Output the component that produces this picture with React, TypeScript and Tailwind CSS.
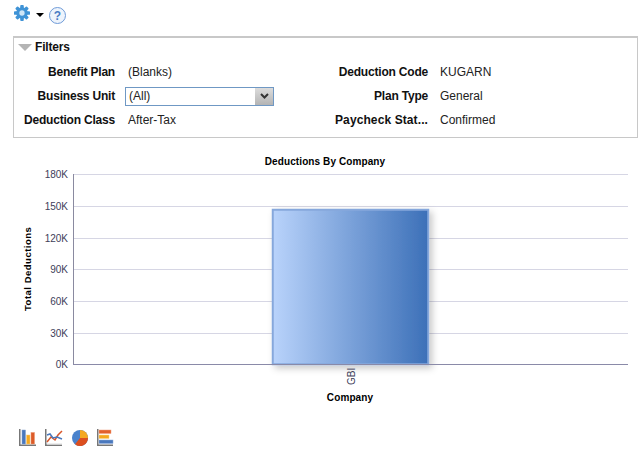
const ticks = [
  { label: "180K", y: 24.5 },
  { label: "150K", y: 56.5 },
  { label: "120K", y: 88.5 },
  { label: "90K", y: 119.5 },
  { label: "60K", y: 151.5 },
  { label: "30K", y: 183.5 },
  { label: "0K", y: 214.5 },
];

const font = "Liberation Sans, Arial, sans-serif";

const GearIcon = () => (
  <svg width="16" height="16" viewBox="0 0 18 18">
    <g fill="#3f93d6">
      <rect x="7" y="0" width="4" height="18" rx="1" />
      <rect x="7" y="0" width="4" height="18" rx="1" transform="rotate(45 9 9)" />
      <rect x="7" y="0" width="4" height="18" rx="1" transform="rotate(90 9 9)" />
      <rect x="7" y="0" width="4" height="18" rx="1" transform="rotate(135 9 9)" />
      <circle cx="9" cy="9" r="6.5" />
    </g>
    <circle cx="9" cy="9" r="3" fill="#cfe6f7" />
  </svg>
);

const HelpIcon = () => (
  <div className="flex h-[17px] w-[17px] items-center justify-center rounded-full border border-[#6f9bd8] bg-[#eef4fc] text-[12px] font-bold text-[#4a7cc4]">
    ?
  </div>
);

const BarIcon = () => (
  <svg width="18" height="17" viewBox="0 0 18 17">
    <path d="M0.75 0V16.25H17" fill="none" stroke="#777" strokeWidth="1.5" />
    <rect x="3" y="1" width="3.5" height="14" fill="#4a78bd" stroke="#7f9fd0" strokeWidth="0.5" />
    <rect x="7.5" y="6" width="3.5" height="9" fill="#f5a81f" stroke="#f8cd7c" strokeWidth="0.5" />
    <rect x="12" y="3.5" width="3.5" height="11.5" fill="#dc5b28" stroke="#ec9570" strokeWidth="0.5" />
  </svg>
);

const LineIcon = () => (
  <svg width="18" height="17" viewBox="0 0 18 17">
    <path d="M0.75 0V16.25H17" fill="none" stroke="#777" strokeWidth="1.5" />
    <path d="M2 13L6 8L10 11L13 6L17 2" fill="none" stroke="#d9562a" strokeWidth="1.5" />
    <path d="M2 6L5 5L8 9L12 8L17 10" fill="none" stroke="#4a78bd" strokeWidth="1.5" />
    <path d="M2 15H17" stroke="#ddd" />
  </svg>
);

const PieIcon = () => (
  <svg width="18" height="18" viewBox="0 0 18 18">
    <circle cx="9" cy="9" r="8" fill="#4a82cc" />
    <path d="M9 9L9 1A8 8 0 0 1 17 9Z" fill="#f5a81f" />
    <path d="M9 9L17 9A8 8 0 0 1 4 15.2Z" fill="#dc4f1f" />
  </svg>
);

const HBarIcon = () => (
  <svg width="17" height="17" viewBox="0 0 17 17">
    <path d="M0.75 0V16.25H16" fill="none" stroke="#777" strokeWidth="1.5" />
    <rect x="2" y="1" width="12" height="3.5" fill="#e2602c" stroke="#f0a080" strokeWidth="0.5" />
    <rect x="2" y="6" width="10" height="3.5" fill="#f5a81f" stroke="#f9d184" strokeWidth="0.5" />
    <rect x="2" y="11" width="14" height="3.5" fill="#4a78bd" stroke="#8fabd8" strokeWidth="0.5" />
  </svg>
);

const Label = ({ children }: { children: React.ReactNode }) => (
  <div className="text-right font-bold tracking-[-0.2px] whitespace-nowrap text-[#111]">{children}</div>
);

const Chart = () => (
  <svg width="644" height="260" viewBox="0 0 644 260" style={{ fontFamily: font }}>
    <defs>
      <linearGradient id="barFill" x1="0" x2="1" y1="0" y2="0">
        <stop offset="0" stopColor="#b9d3fb" />
        <stop offset="1" stopColor="#3c70b8" />
      </linearGradient>
      <filter id="barShadow" x="-10%" y="-10%" width="125%" height="125%">
        <feDropShadow dx="3" dy="3" stdDeviation="3.5" floodColor="#000" floodOpacity="0.22" />
      </filter>
    </defs>
    <text x="325" y="15" textAnchor="middle" fontSize="10" fontWeight="bold" letterSpacing="0.1" fill="#000">
      Deductions By Company
    </text>
    {ticks.map((t) => (
      <g key={t.label}>
        {t.label !== "0K" && <line x1="73" x2="628" y1={t.y} y2={t.y} stroke="#d6d6e4" />}
        <text x="68" y={t.y + 3.5} textAnchor="end" fontSize="10" fill="#40405a">
          {t.label}
        </text>
      </g>
    ))}
    <line x1="73.5" x2="73.5" y1="24" y2="214" stroke="#8a8aa0" />
    <rect
      x="272.75"
      y="59.75"
      width="155.5"
      height="154.5"
      fill="url(#barFill)"
      stroke="#86a8dc"
      strokeWidth="2"
      filter="url(#barShadow)"
    />
    <line x1="73" x2="628" y1="214.5" y2="214.5" stroke="#8a8aa8" />
    <text transform="translate(355 235) rotate(-90)" fontSize="10" fill="#40405a">
      GBI
    </text>
    <text x="350" y="251" textAnchor="middle" fontSize="10" fontWeight="bold" letterSpacing="0.1" fill="#000">
      Company
    </text>
    <text transform="translate(31 161) rotate(-90)" fontSize="9.5" fontWeight="bold" letterSpacing="0.5" fill="#000">
      Total Deductions
    </text>
  </svg>
);

export default function App() {
  return (
    <div
      className="h-[454px] w-[644px] overflow-hidden bg-white text-xs text-[#222]"
      style={{ fontFamily: font }}
    >
      {/* Toolbar */}
      <div className="flex h-[36px] items-start pl-[14px] pt-[5px]">
        <GearIcon />
        <div className="ml-[6px] mt-[8px] h-0 w-0 border-x-[4px] border-t-[4px] border-x-transparent border-t-black" />
        <div className="ml-[5px] mt-[2px]">
          <HelpIcon />
        </div>
      </div>

      {/* Filters */}
      <div className="ml-[13px] mr-[6px] h-[102px] border border-t-2 border-[#c8c8c8] px-[4px] pt-[2px]">
        <div className="flex h-[14px] items-center gap-[3px]">
          <div className="h-0 w-0 border-x-[7px] border-t-[7px] border-x-transparent border-t-[#b4b4b4]" />
          <span className="font-bold tracking-[-0.2px] text-[#111]">Filters</span>
        </div>
        <div className="mt-[6px] grid grid-cols-[97px_187px_102px_1fr] items-center gap-x-[12px] leading-[14px]">
          <div className="flex h-[24px] items-center justify-end"><Label>Benefit Plan</Label></div>
          <div className="pl-[1px]">(Blanks)</div>
          <div className="flex items-center justify-end"><Label>Deduction Code</Label></div>
          <div>KUGARN</div>

          <div className="flex h-[24px] items-center justify-end"><Label>Business Unit</Label></div>
          <div className="-ml-[2px] flex h-[19px] w-[149px] items-center justify-between border border-[#6f98c4] pl-[3px]">
            <span>(All)</span>
            <div className="flex h-[17px] w-[18px] items-center justify-center bg-gradient-to-b from-[#dcdcdc] to-[#b4b4b4]">
              <svg width="9" height="6" viewBox="0 0 9 6">
                <path d="M1 1L4.5 4.5L8 1" fill="none" stroke="#333" strokeWidth="2" />
              </svg>
            </div>
          </div>
          <div className="flex items-center justify-end"><Label>Plan Type</Label></div>
          <div>General</div>

          <div className="flex h-[24px] items-center justify-end"><Label>Deduction Class</Label></div>
          <div className="pl-[1px]">After-Tax</div>
          <div className="flex items-center justify-end">
            <div className="whitespace-nowrap font-bold tracking-[0.1px] text-[#111]">Paycheck Stat...</div>
          </div>
          <div>Confirmed</div>
        </div>
      </div>

      {/* Chart */}
      <div className="h-[272px] pt-[12px]">
        <Chart />
      </div>

      {/* Chart type icons */}
      <div className="mt-[19px] flex items-start gap-[8px] pl-[19px]">
        <BarIcon />
        <LineIcon />
        <PieIcon />
        <HBarIcon />
      </div>
    </div>
  );
}
